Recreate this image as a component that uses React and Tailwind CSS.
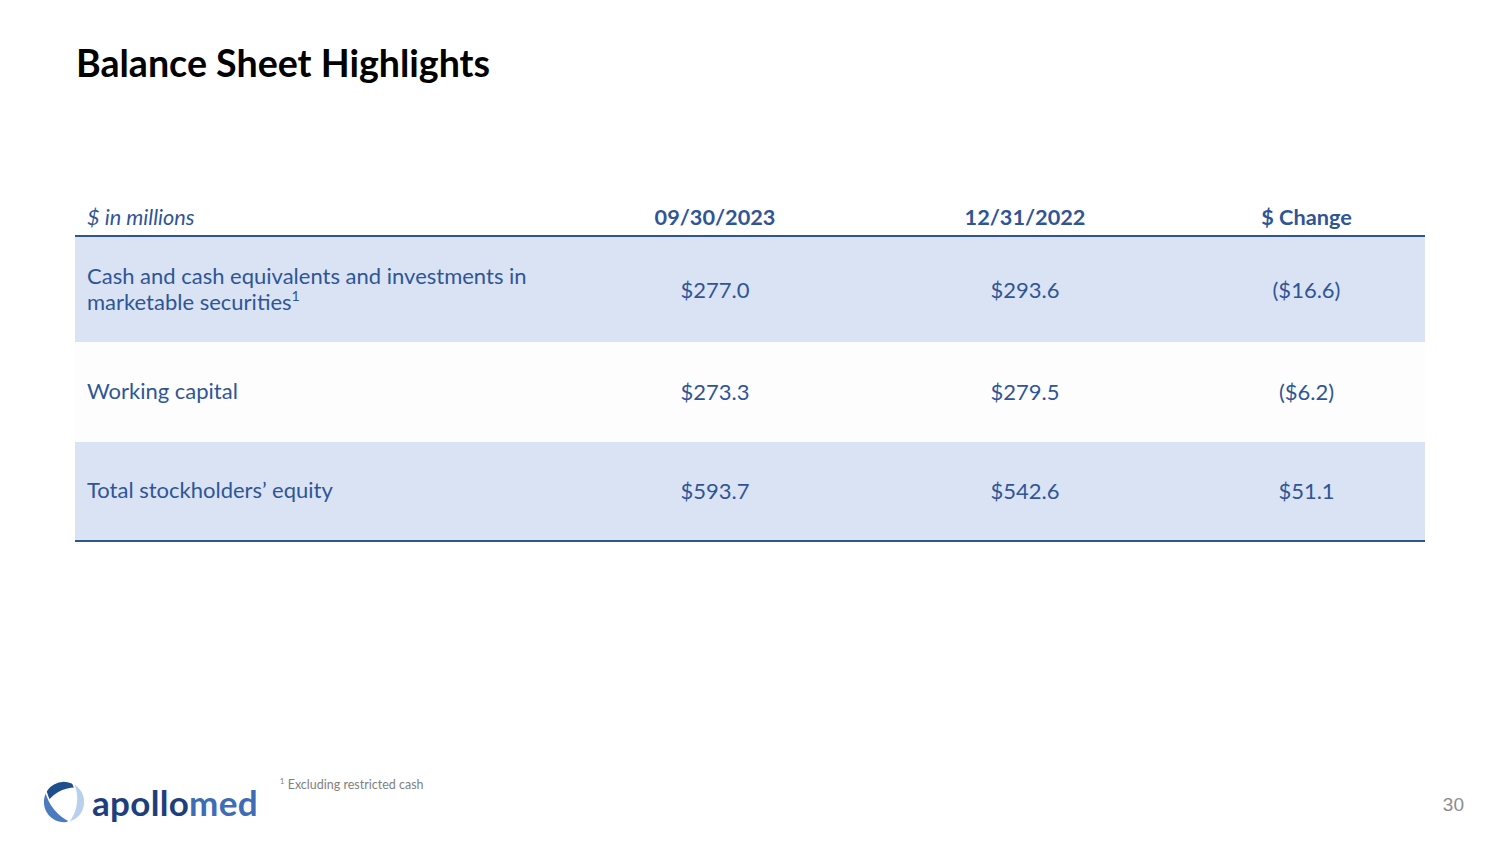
const rows = [
  {
    label: (
      <>
        Cash and cash equivalents and investments in
        <br />
        marketable securities<sup className="text-[14px] -top-[9px]">1</sup>
      </>
    ),
    a: "$277.0",
    b: "$293.6",
    c: "($16.6)",
    shade: true,
    h: "h-[105px]",
  },
  { label: "Working capital", a: "$273.3", b: "$279.5", c: "($6.2)", shade: false, h: "h-[100px]" },
  { label: "Total stockholders’ equity", a: "$593.7", b: "$542.6", c: "$51.1", shade: true, h: "h-[100px]" },
];

function Logo() {
  return (
    <div className="flex items-center gap-[5px]">
      <svg width="46" height="46" viewBox="0 0 44 44">
        <path d="M3.2 28.8 A20 20 0 0 1 37.3 9.1 A32 32 0 0 0 3.2 28.8Z" fill="#1f4e8c" stroke="#fff" strokeWidth="1.5" />
        <path d="M4.7 12 A20 20 0 0 0 28.8 40.8 A45 45 0 0 1 4.7 12Z" fill="#4a7bc0" stroke="#fff" strokeWidth="1.5" />
        <path d="M30.5 3.9 A20 20 0 0 1 25.5 41.7 A35 35 0 0 0 30.5 3.9Z" fill="#b9d0ec" stroke="#fff" strokeWidth="1.5" />
      </svg>
      <div className="text-[35px] font-bold leading-none tracking-[0.3px] font-['Lato','Open_Sans',sans-serif]">
        <span className="text-[#1e3f7e]">apollo</span>
        <span className="text-[#3f6db5]">med</span>
      </div>
    </div>
  );
}

export default function App() {
  return (
    <div className="w-[1500px] h-[844px] bg-white flex flex-col font-['Lato','Noto_Sans',sans-serif]">
      <h1 className="pl-[76px] pt-[43px] text-[37.6px] font-bold leading-[40px] text-black">
        Balance Sheet Highlights
      </h1>

      <div className="mx-[75px] mt-[116px] text-[#2f5597]">
        <div className="grid grid-cols-[485px_310px_310px_1fr] h-[38px] items-center border-b-2 border-[#2f5597] text-[21.7px]">
          <div className="pl-[12px] italic">$ in millions</div>
          <div className="text-center font-bold">09/30/2023</div>
          <div className="text-center font-bold">12/31/2022</div>
          <div className="text-center font-bold pl-[8px]">$ Change</div>
        </div>
        {rows.map((r, i) => (
          <div
            key={i}
            className={`grid grid-cols-[485px_310px_310px_1fr] items-center text-[22px] leading-[26px] ${r.h} ${
              r.shade ? "bg-[#dae3f3]" : "bg-[#fdfdfd]"
            } ${i === rows.length - 1 ? "border-b-2 border-[#2f5597]" : ""}`}
          >
            <div className="pl-[12px] -mt-[2px]">{r.label}</div>
            <div className="text-center">{r.a}</div>
            <div className="text-center">{r.b}</div>
            <div className="text-center pl-[8px]">{r.c}</div>
          </div>
        ))}
      </div>

      <div className="flex-1" />

      <div className="flex items-start pl-[41px] pr-[36px] pb-[19px]">
        <Logo />
        <div className="ml-[22px] -mt-[3px] text-[12.5px] text-[#7f7f7f]">
          <sup className="text-[8px] -top-[5px]">1</sup> Excluding restricted cash
        </div>
        <div className="flex-1" />
        <div className="mt-[12px] text-[19px] text-[#8c8c8c] font-['Liberation_Sans',Arial,sans-serif]">30</div>
      </div>
    </div>
  );
}
